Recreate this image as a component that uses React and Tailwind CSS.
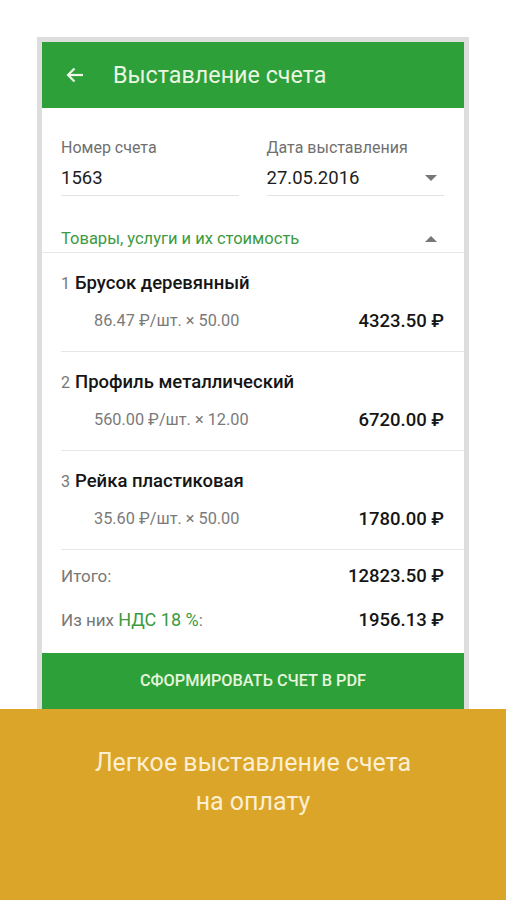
import React from 'react';

const items = [
  { n: 1, name: 'Брусок деревянный', price: '86.47 ₽/шт. × 50.00', sum: '4323.50 ₽' },
  { n: 2, name: 'Профиль металлический', price: '560.00 ₽/шт. × 12.00', sum: '6720.00 ₽' },
  { n: 3, name: 'Рейка пластиковая', price: '35.60 ₽/шт. × 50.00', sum: '1780.00 ₽' },
];

const Caret = ({ up }) => (
  <svg width="12" height="6" viewBox="0 0 12 6" className="text-[#777]">
    {up ? <path d="M0 6 L6 0 L12 6 Z" fill="currentColor" /> : <path d="M0 0 L6 6 L12 0 Z" fill="currentColor" />}
  </svg>
);

const App = () => {
  return (
    <div className="w-[506px] h-[900px] bg-white overflow-hidden font-['Roboto','Noto_Sans',sans-serif]">
      <div className="px-[37px] pt-[37px]">
        <div className="h-[672px] border-[5px] border-b-0 border-[#dcdedb] bg-white flex flex-col">
          {/* toolbar */}
          <div className="h-[66px] bg-[#2da039] flex items-center pl-6 shrink-0">
            <svg width="18" height="16" viewBox="0 0 18 16" fill="none" stroke="#eef8e8" strokeWidth="2.2">
              <path d="M17 8 H2" />
              <path d="M8.5 1.5 L2 8 L8.5 14.5" />
            </svg>
            <span className="ml-[29px] text-[23.3px] text-[#eaf6e2]">Выставление счета</span>
          </div>

          {/* fields */}
          <div className="pl-[19px] pr-[20px] pt-[30px] flex gap-[28px]">
            <div className="flex-1 border-b border-[#e2e2e2] pb-[5px]">
              <div className="text-[16px] leading-[20px] text-[#6f6f6f]">Номер счета</div>
              <div className="mt-[8px] text-[18.5px] leading-[24px] text-[#1d1d1d]">1563</div>
            </div>
            <div className="flex-1 border-b border-[#e2e2e2] pb-[5px]">
              <div className="text-[16px] leading-[20px] text-[#6f6f6f]">Дата выставления</div>
              <div className="mt-[8px] flex items-center justify-between pr-[7px]">
                <span className="text-[18.5px] leading-[24px] text-[#1d1d1d]">27.05.2016</span>
                <Caret />
              </div>
            </div>
          </div>

          <div className="mt-[33px] pl-[19px] pr-[27px] pb-[3px] flex items-center justify-between border-b border-[#e6e6e6]">
            <span className="text-[16.5px] leading-[20px] text-[#3c9a3f]">Товары, услуги и их стоимость</span>
            <Caret up />
          </div>

          {/* items */}
          {items.map((it) => (
            <div key={it.n} className="ml-[19px] border-b border-[#e6e6e6] pt-[18px] pb-[18px]">
              <div className="flex items-baseline leading-[24px]">
                <span className="text-[16px] text-[#777] mr-[5px]">{it.n}</span>
                <span className="text-[18.5px] font-medium text-[#151515]">{it.name}</span>
              </div>
              <div className="mt-[13px] flex items-center justify-between pr-[20px] pl-[33px] leading-[24px]">
                <span className="text-[16.3px] text-[#7a7a7a]">{it.price}</span>
                <span className="text-[18.5px] font-medium text-[#151515]">{it.sum}</span>
              </div>
            </div>
          ))}

          {/* totals */}
          <div className="pl-[19px] pr-[20px] pt-[14px]">
            <div className="flex items-center justify-between leading-[24px]">
              <span className="text-[17px] text-[#777]">Итого:</span>
              <span className="text-[18.5px] font-medium text-[#151515]">12823.50 ₽</span>
            </div>
            <div className="mt-[20px] flex items-center justify-between leading-[24px]">
              <span className="text-[17px] text-[#777]">
                Из них <span className="text-[18px] text-[#3c9a3f]">НДС 18 %</span>:
              </span>
              <span className="text-[18.5px] font-medium text-[#151515]">1956.13 ₽</span>
            </div>
          </div>

          <div className="mt-auto h-[56px] bg-[#2da039] flex items-center justify-center">
            <span className="text-[16.3px] font-medium text-[#e6f5dc]">СФОРМИРОВАТЬ СЧЕТ В PDF</span>
          </div>
        </div>
      </div>

      {/* caption band */}
      <div className="h-[191px] bg-[#dba52a] pt-[34px] text-center text-[25px] leading-[39px] text-[#fcefd2]">
        <div>Легкое выставление счета</div>
        <div>на оплату</div>
      </div>
    </div>
  );
};

export default App;
